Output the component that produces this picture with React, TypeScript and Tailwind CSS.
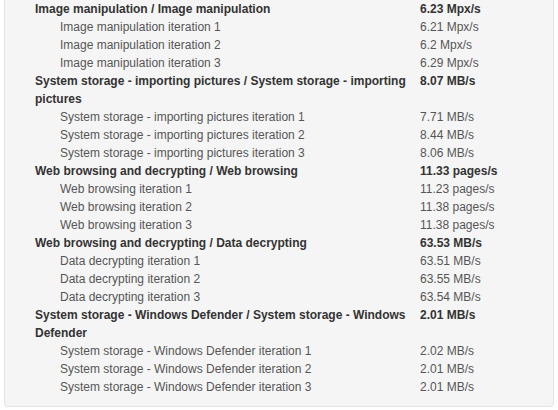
const groups = [
  {
    title: "Image manipulation / Image manipulation",
    value: "6.23 Mpx/s",
    items: [
      ["Image manipulation iteration 1", "6.21 Mpx/s"],
      ["Image manipulation iteration 2", "6.2 Mpx/s"],
      ["Image manipulation iteration 3", "6.29 Mpx/s"],
    ],
  },
  {
    title: "System storage - importing pictures / System storage - importing pictures",
    value: "8.07 MB/s",
    items: [
      ["System storage - importing pictures iteration 1", "7.71 MB/s"],
      ["System storage - importing pictures iteration 2", "8.44 MB/s"],
      ["System storage - importing pictures iteration 3", "8.06 MB/s"],
    ],
  },
  {
    title: "Web browsing and decrypting / Web browsing",
    value: "11.33 pages/s",
    items: [
      ["Web browsing iteration 1", "11.23 pages/s"],
      ["Web browsing iteration 2", "11.38 pages/s"],
      ["Web browsing iteration 3", "11.38 pages/s"],
    ],
  },
  {
    title: "Web browsing and decrypting / Data decrypting",
    value: "63.53 MB/s",
    items: [
      ["Data decrypting iteration 1", "63.51 MB/s"],
      ["Data decrypting iteration 2", "63.55 MB/s"],
      ["Data decrypting iteration 3", "63.54 MB/s"],
    ],
  },
  {
    title: "System storage - Windows Defender / System storage - Windows Defender",
    value: "2.01 MB/s",
    items: [
      ["System storage - Windows Defender iteration 1", "2.02 MB/s"],
      ["System storage - Windows Defender iteration 2", "2.01 MB/s"],
      ["System storage - Windows Defender iteration 3", "2.01 MB/s"],
    ],
  },
];

export default function App() {
  return (
    <div className="h-[410px] w-[558px] overflow-hidden bg-white font-['Liberation_Sans',Arial,sans-serif] text-[12px] leading-[18px]">
      {/* panel, top is scrolled out of view */}
      <div className="ml-[4px] mt-[-10px] w-[550px] rounded-b-[4px] border border-[#e3e3e3] bg-[#f5f5f5] pb-[10px] pl-[30px] pt-[9px]">
        {groups.map((g) => (
          <div key={g.title}>
            <div className="flex font-bold text-[#333]">
              <div className="w-[385px] shrink-0 pr-[8px]">{g.title}</div>
              <div>{g.value}</div>
            </div>
            {g.items.map(([name, val]) => (
              <div key={name} className="flex text-[#555]">
                <div className="w-[385px] shrink-0 pl-[25px] pr-[8px]">{name}</div>
                <div>{val}</div>
              </div>
            ))}
          </div>
        ))}
      </div>
    </div>
  );
}
